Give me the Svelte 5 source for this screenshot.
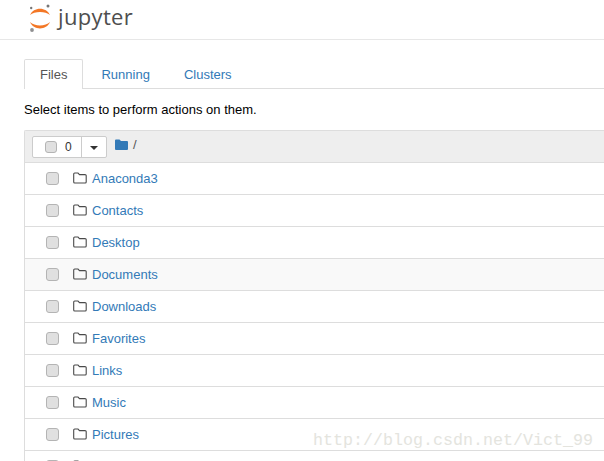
<script>
  const folders = ['Anaconda3','Contacts','Desktop','Documents','Downloads','Favorites','Links','Music','Pictures',''];
</script>

<div class="page">
  <header class="top">
    <svg class="logo" width="26" height="32" viewBox="0 0 26 32" aria-hidden="true">
      <path d="M2 13 C5.5 4.5 18.5 4.5 22 13 C17.5 9 6.5 9 2 13Z" fill="#f37726"/>
      <path d="M2 20 C6.5 24.5 17.5 24.5 22 20 C18.5 28.5 5.5 28.5 2 20Z" fill="#f37726"/>
      <circle cx="3.2" cy="6" r="1.2" fill="#767677"/>
      <circle cx="20" cy="4" r="1.5" fill="#767677"/>
      <circle cx="4" cy="28" r="1.9" fill="#8f8f90"/>
    </svg>
    <span class="word">jupyter</span>
  </header>

  <main class="content">
    <nav class="tabs">
      <span class="tab active">Files</span>
      <span class="tab">Running</span>
      <span class="tab">Clusters</span>
    </nav>
    <p class="hint">Select items to perform actions on them.</p>

    <section class="list">
      <div class="head">
        <div class="group">
          <span class="count"><span class="box"></span><span class="zero">0</span></span>
          <span class="drop"><span class="caret"></span></span>
        </div>
        <svg class="crumb" width="13" height="11" viewBox="0 0 13 11" aria-hidden="true">
          <path d="M0 1.5 Q0 0.5 1 0.5 H4.5 L6 2 H12 Q13 2 13 3 V10 Q13 11 12 11 H1 Q0 11 0 10Z" fill="#337ab7"/>
        </svg>
        <span class="slash">/</span>
      </div>
      {#each folders as name}
        <div class="row" class:tint={name === 'Documents'}>
          <span class="box rowbox"></span>
          <svg class="folder" width="14" height="12" viewBox="0 0 14 12" aria-hidden="true">
            <path d="M0.7 10 V2 Q0.7 1 1.7 1 H5 L6.5 2.6 H12 Q13.2 2.6 13.2 3.6 V10 Q13.2 11 12.2 11 H1.7 Q0.7 11 0.7 10Z" fill="none" stroke="#4a4a4a" stroke-width="1.1"/>
          </svg>
          <span class="link">{name}</span>
        </div>
      {/each}
    </section>
  </main>

  <span class="mark">http://blog.csdn.net/Vict_99</span>
</div>

<style>
  :global(body) {
    margin: 0;
    background: #fff;
    overflow: hidden;
  }
  .page {
    width: 604px;
    height: 461px;
    position: relative;
    overflow: hidden;
    font-family: "Liberation Sans", Arial, sans-serif;
    font-size: 13px;
    color: #000;
  }
  .top {
    height: 39px;
    border-bottom: 1px solid #e7e7e7;
    display: flex;
    align-items: flex-start;
    padding-left: 28px;
  }
  .logo {
    margin-top: 2px;
    flex: none;
  }
  .word {
    font-family: "Open Sans", sans-serif;
    font-size: 22px;
    line-height: 32px;
    color: #4e4e4e;
    margin-left: 4px;
    letter-spacing: 0.35px;
  }
  .content {
    padding: 19px 0 0 24px;
  }
  .tabs {
    display: flex;
    height: 29px;
    border-bottom: 1px solid #ddd;
  }
  .tab {
    padding: 0 15px;
    margin-right: 2px;
    height: 30px;
    box-sizing: border-box;
    border: 1px solid transparent;
    border-bottom: 0;
    line-height: 29px;
    color: #337ab7;
    font-size: 13px;
  }
  .tab.active {
    color: #555;
    background: #fff;
    border-color: #ddd;
    border-radius: 2px 2px 0 0;
  }
  .hint {
    margin: 0;
    height: 41px;
    line-height: 41px;
    font-size: 13px;
  }
  .list {
    border: 1px solid #ddd;
    border-right: 0;
    border-bottom: 0;
    border-radius: 2px 0 0 0;
  }
  .head {
    height: 31px;
    background: #eee;
    border-bottom: 1px solid #ddd;
    display: flex;
    align-items: flex-start;
    padding-left: 7px;
  }
  .group {
    display: flex;
    height: 22px;
    margin-top: 5px;
    background: #fff;
    border: 1px solid #ccc;
    border-radius: 2px;
    box-sizing: border-box;
  }
  .count {
    width: 49px;
    display: flex;
    align-items: center;
    padding-left: 12px;
    box-sizing: border-box;
    border-right: 1px solid #ccc;
  }
  .zero {
    margin-left: 8px;
    font-size: 12px;
    color: #333;
  }
  .drop {
    width: 24px;
    display: flex;
    align-items: center;
    justify-content: center;
  }
  .caret {
    width: 0;
    height: 0;
    border-left: 4px solid transparent;
    border-right: 4px solid transparent;
    border-top: 4px solid #333;
    margin-top: 2px;
  }
  .box {
    width: 12px;
    height: 12px;
    box-sizing: border-box;
    background: #e0e0e0;
    border: 1px solid #b4b4b4;
    border-radius: 3px;
    flex: none;
  }
  .crumb {
    margin: 8px 0 0 8px;
    flex: none;
  }
  .slash {
    margin-left: 5px;
    margin-top: 6px;
    font-size: 13px;
    line-height: 16px;
    color: #555;
  }
  .row {
    height: 31px;
    border-bottom: 1px solid #ddd;
    display: flex;
    align-items: center;
    padding-left: 21px;
  }
  .row.tint {
    background: #f9f9f9;
  }
  .box.rowbox {
    width: 13px;
    height: 13px;
    margin-right: 14px;
  }
  .folder {
    margin-right: 5px;
    margin-bottom: 2px;
    flex: none;
  }
  .link {
    color: #337ab7;
    font-size: 13px;
  }
  .mark {
    position: absolute;
    left: 313px;
    top: 431px;
    font-family: "Liberation Mono", monospace;
    font-size: 16.67px;
    line-height: 20px;
    color: #e4e4de;
    white-space: nowrap;
  }
</style>
